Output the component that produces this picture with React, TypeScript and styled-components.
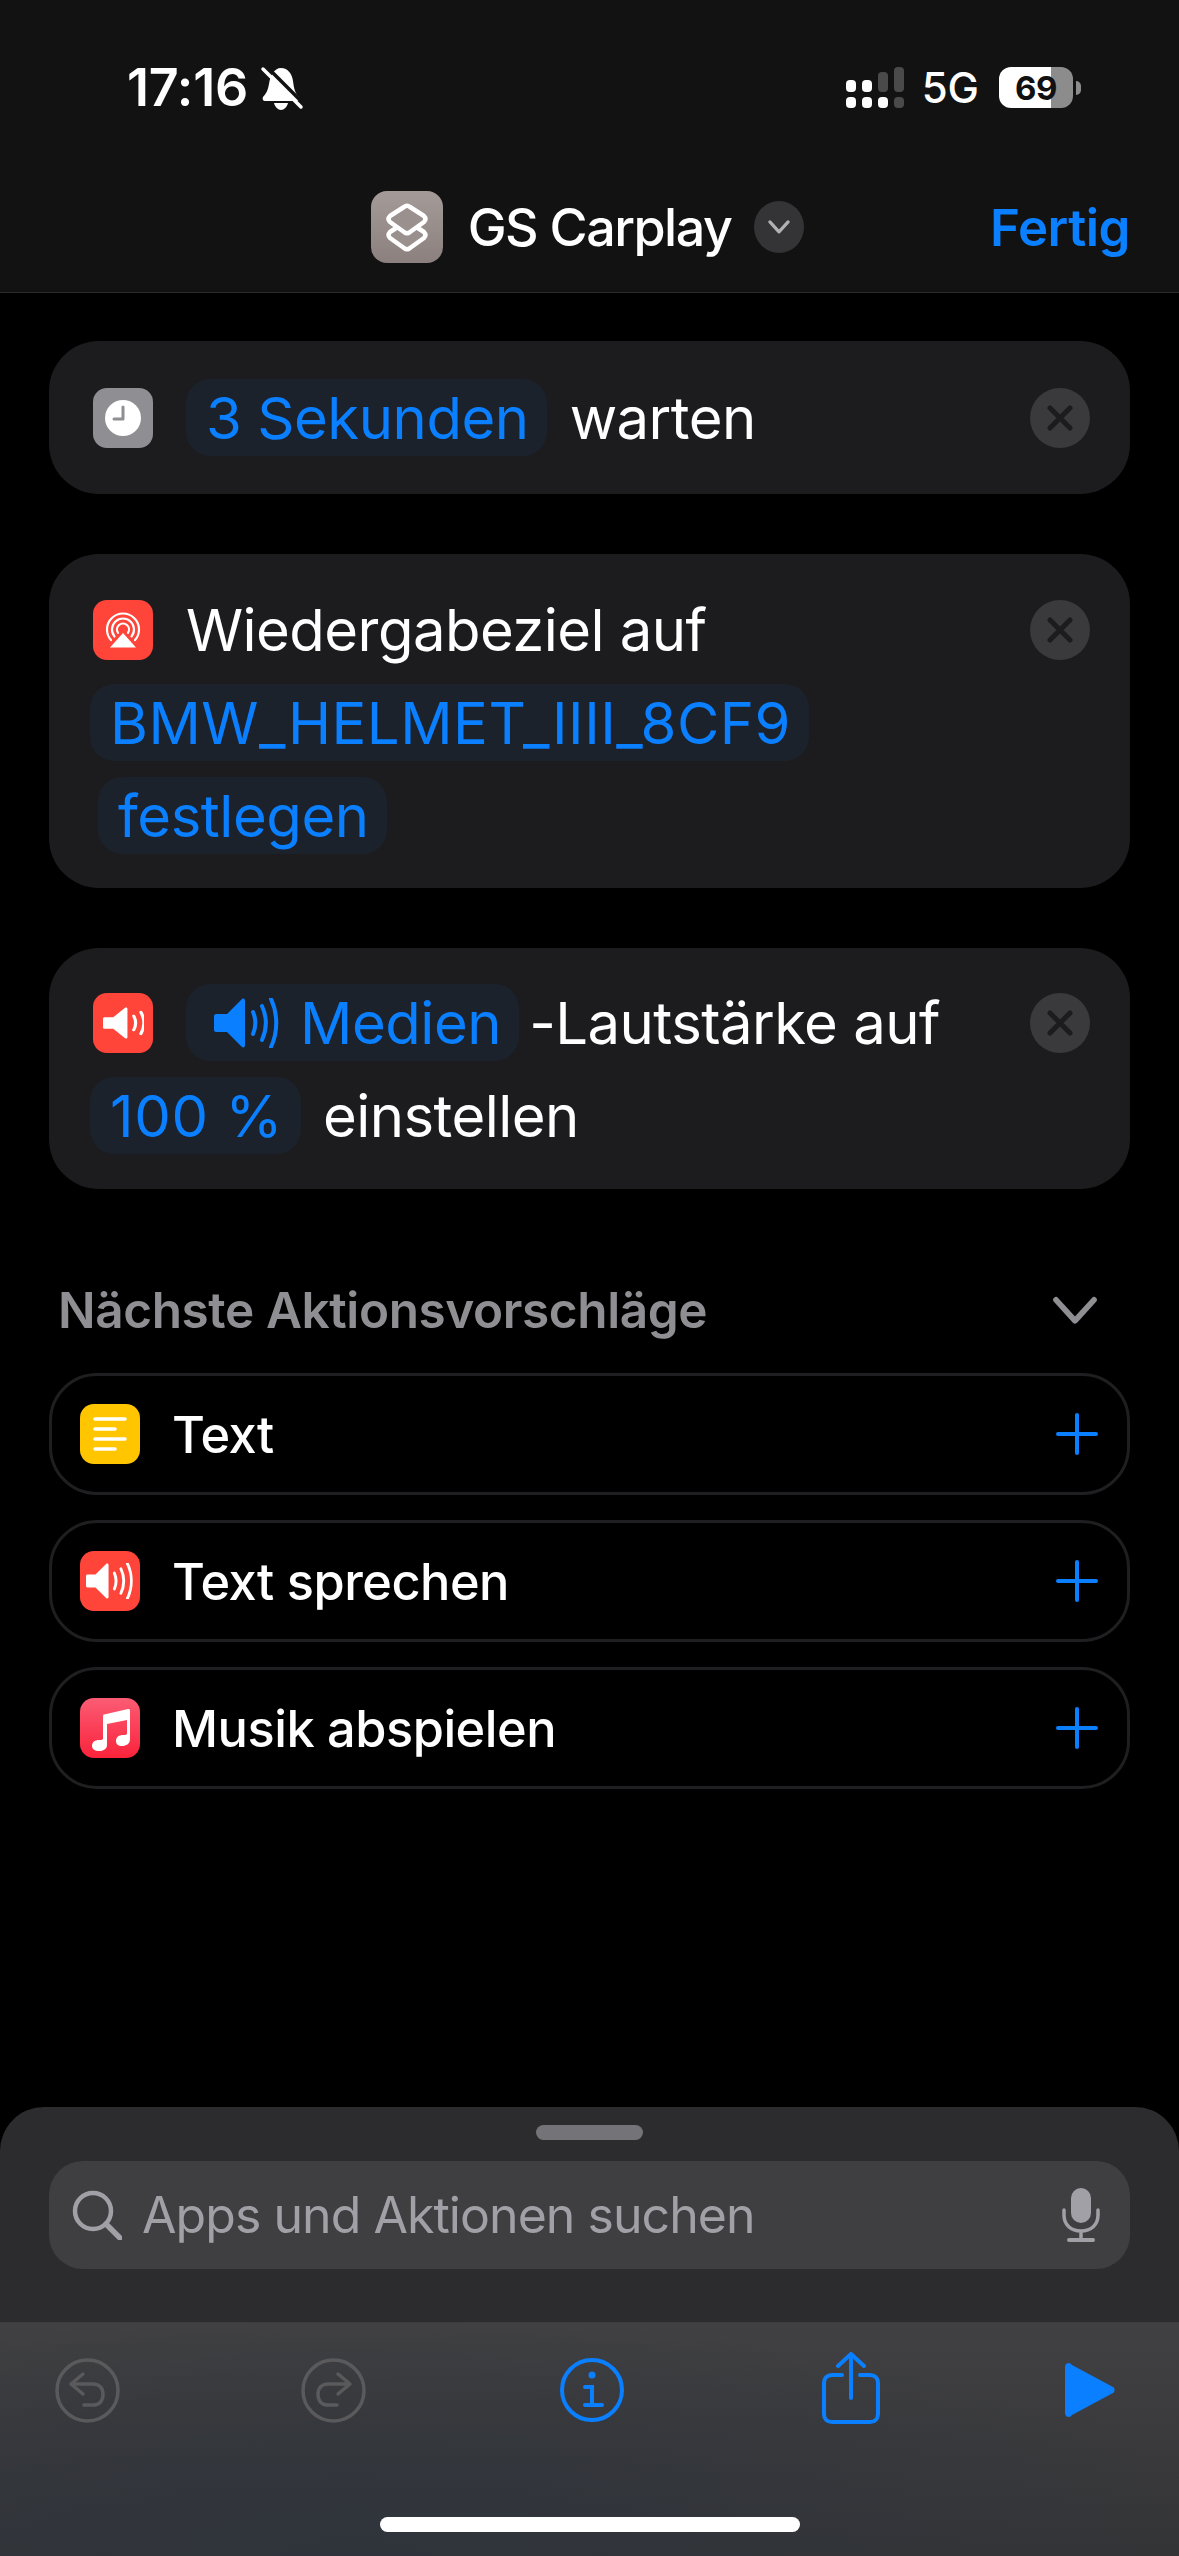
import React from 'react'
import styled, { createGlobalStyle } from 'styled-components'

const blue = '#0a7fff'

const GlobalStyle = createGlobalStyle`
  html, body { margin: 0; padding: 0; background: #000; }
  body { font-family: Inter, "Noto Sans", sans-serif; color: #fff; -webkit-font-smoothing: antialiased; }
`

const Screen = styled.div`
  width: 1179px;
  height: 2556px;
  display: flex;
  flex-direction: column;
  background: #000;
  overflow: hidden;
`

const Header = styled.header`
  height: 293px;
  flex: none;
  box-sizing: border-box;
  padding-top: 54px;
  background: #121212;
  border-bottom: 1px solid #2a2a2b;
`

const StatusBar = styled.div`
  height: 67px;
  padding: 0 98px 0 127px;
  display: flex;
  align-items: center;
  justify-content: space-between;
`

const TimeGroup = styled.div`
  display: flex;
  align-items: center;
  gap: 12px;
`

const Time = styled.span`
  font-size: 52px;
  font-weight: 600;
  letter-spacing: -0.2px;
`

const StatusRight = styled.div`
  display: flex;
  align-items: center;
`

const Network = styled.span`
  margin: 0 20px 0 18px;
  font-size: 42px;
  font-weight: 500;
`

const Battery = styled.div`
  width: 74px;
  height: 41px;
  border-radius: 12px;
  overflow: hidden;
  display: flex;
  align-items: center;
  justify-content: center;
  color: #111;
  font-size: 33px;
  font-weight: 700;
  letter-spacing: -0.5px;
  background: linear-gradient(to right, #fff 70%, #8c8c8c 70%);
`

const BatteryNub = styled.div`
  width: 5px;
  height: 14px;
  margin-left: 3px;
  border-radius: 0 8px 8px 0;
  background: #8c8c8c;
`

const NavBar = styled.div`
  margin-top: 70px;
  padding: 0 49px;
  display: grid;
  grid-template-columns: 1fr auto 1fr;
  align-items: center;
`

const TitleGroup = styled.div`
  grid-column: 2;
  margin-right: 4px;
  display: flex;
  align-items: center;
`

const AppIcon = styled.div`
  width: 72px;
  height: 72px;
  border-radius: 16px;
  display: flex;
  align-items: center;
  justify-content: center;
  background: linear-gradient(#a49b98, #8b807d);
`

const Title = styled.span`
  margin: 0 23px 0 25px;
  font-size: 52px;
  font-weight: 500;
  letter-spacing: -1.5px;
`

const TitleChevron = styled.div`
  width: 50px;
  height: 52px;
  border-radius: 50%;
  display: flex;
  align-items: center;
  justify-content: center;
  background: #343437;
`

const Done = styled.span`
  justify-self: end;
  color: ${blue};
  font-size: 51px;
  font-weight: 600;
  letter-spacing: -0.5px;
`

const Content = styled.main`
  flex: 1;
  padding: 48px 49px 0;
  display: flex;
  flex-direction: column;
`

const Card = styled.section<{ $top: number; $bottom: number; $after: number }>`
  display: flex;
  justify-content: space-between;
  box-sizing: border-box;
  margin-bottom: ${(p) => p.$after}px;
  padding: ${(p) => p.$top}px 40px ${(p) => p.$bottom}px 41px;
  border-radius: 50px;
  background: #1c1c1e;
`

const Lines = styled.div`
  display: flex;
  flex-direction: column;
  gap: 16px;
`

const Line = styled.div`
  height: 77px;
  display: flex;
  align-items: center;
`

const ActionIcon = styled.div<{ $bg: string }>`
  flex: none;
  width: 60px;
  height: 60px;
  margin: 0 33px 0 3px;
  border-radius: 14px;
  display: flex;
  align-items: center;
  justify-content: center;
  background: ${(p) => p.$bg};
`

const Pill = styled.span<{ $indent?: number; $track?: number }>`
  height: 77px;
  box-sizing: border-box;
  margin-left: ${(p) => p.$indent ?? 0}px;
  padding: 0 18px 0 20px;
  display: inline-flex;
  align-items: center;
  gap: 20px;
  border-radius: 24px;
  background: #1b222c;
  color: ${blue};
  font-size: 58px;
  letter-spacing: ${(p) => p.$track ?? -0.45}px;
  white-space: nowrap;
`

const PillGlyph = styled.span`
  margin-left: 8px;
  display: flex;
`

const Plain = styled.span<{ $gap?: number }>`
  margin-left: ${(p) => p.$gap ?? 0}px;
  font-size: 58px;
  letter-spacing: -0.55px;
  white-space: nowrap;
`

const Remove = styled.div`
  flex: none;
  width: 60px;
  height: 60px;
  margin-top: 9px;
  border-radius: 50%;
  display: flex;
  align-items: center;
  justify-content: center;
  background: #3a3a3c;
`

const SectionHead = styled.div`
  margin: 95px 0 37px;
  padding: 0 32px 0 9px;
  height: 52px;
  display: flex;
  align-items: center;
  justify-content: space-between;
  color: #8e8e93;
  font-size: 49.5px;
  font-weight: 600;
  letter-spacing: -0.4px;
`

const Suggestions = styled.div`
  display: flex;
  flex-direction: column;
  gap: 25px;
`

const Suggestion = styled.div`
  height: 122px;
  box-sizing: border-box;
  padding: 0 29px 0 28px;
  display: flex;
  align-items: center;
  border: 3px solid #1f1f21;
  border-radius: 48px;
`

const SuggestionIcon = styled(ActionIcon)`
  margin: 0 32px 0 0;
`

const SuggestionLabel = styled.span`
  flex: 1;
  font-size: 50.5px;
  font-weight: 500;
  letter-spacing: -0.5px;
`

const Sheet = styled.div`
  height: 449px;
  flex: none;
  display: flex;
  flex-direction: column;
  border-radius: 44px 44px 0 0;
  overflow: hidden;
  background: #2c2c2e;
`

const Handle = styled.div`
  flex: none;
  width: 107px;
  height: 15px;
  margin: 18px auto 21px;
  border-radius: 8px;
  background: #737378;
`

const SearchField = styled.div`
  flex: none;
  height: 108px;
  margin: 0 49px;
  padding: 0 30px 0 23px;
  display: flex;
  align-items: center;
  border-radius: 34px;
  background: #3f3f41;
`

const SearchText = styled.span`
  flex: 1;
  margin-left: 20px;
  color: #a0a0a6;
  font-size: 50px;
  letter-spacing: -0.95px;
`

const Toolbar = styled.div`
  flex: 1;
  margin-top: 53px;
  padding-top: 29px;
  border-top: 1px solid #3d3d3f;
  background: radial-gradient(ellipse 900px 240px at 30% 100%, #2f343c 0%, transparent 100%),
    linear-gradient(#414143, #343436);
`

const ToolRow = styled.div`
  height: 72px;
  padding-left: 55px;
  display: grid;
  grid-template-columns: 246px 259px 262px 243px auto;
  align-items: center;
`

const ShareSvg = styled.svg`
  margin-bottom: 4px;
`

const HomeBar = styled.div`
  width: 420px;
  height: 15px;
  margin: 93px auto 0;
  border-radius: 8px;
  background: #fff;
`

const Bell = () => (
  <svg width="44" height="44" viewBox="0 0 44 44">
    <path d="M21 2c7 0 11 6 12 13 1 8 2 12 6 16 1 2 0 4-2 4H5c-2 0-3-2-2-4 3-3 5-7 6-13C10 10 14 2 21 2z" fill="#fff" />
    <path d="M14 37h14c-1 4-4 7-7 7s-6-3-7-7z" fill="#fff" />
    <path d="M6 0l38 38" stroke="#121212" strokeWidth="3.500" />
    <path d="M3 3l38 38" stroke="#fff" strokeWidth="3.500" strokeLinecap="round" />
  </svg>
)

const Signal = () => (
  <svg width="58" height="41" viewBox="0 0 58 41">
    <rect x="0" y="13" width="10" height="12" rx="4" fill="#fff" />
    <rect x="16" y="13" width="10" height="12" rx="4" fill="#fff" />
    <rect x="32" y="5" width="10" height="20" rx="4" fill="#4a4a4a" />
    <rect x="48" y="0" width="10" height="25" rx="4" fill="#4a4a4a" />
    <rect x="0" y="30" width="10" height="11" rx="4" fill="#fff" />
    <rect x="16" y="30" width="10" height="11" rx="4" fill="#fff" />
    <rect x="32" y="30" width="10" height="11" rx="4" fill="#fff" />
    <rect x="48" y="30" width="10" height="11" rx="4" fill="#4a4a4a" />
  </svg>
)

const ShortcutsGlyph = () => (
  <svg width="46" height="50" viewBox="0 0 46 50" fill="#9a908d" stroke="#fff" strokeWidth="4.500" strokeLinejoin="round">
    <path d="M20 21Q23 18.500 26 21L40 30Q43 33 40 36L26 46Q23 48.500 20 46L6 36Q3 33 6 30Z" />
    <path d="M20 5Q23 2.500 26 5L40 14Q43 17 40 20L26 30Q23 32.500 20 30L6 20Q3 17 6 14Z" />
  </svg>
)

const Chevron = ({ size, color, weight }: { size: number; color: string; weight: number }) => (
  <svg width={size} height={size * 0.62} viewBox="0 0 24 15" fill="none" stroke={color} strokeWidth={weight} strokeLinecap="round" strokeLinejoin="round">
    <path d="M2 2l10 11L22 2" />
  </svg>
)

const ClockGlyph = () => (
  <svg width="36" height="36" viewBox="0 0 36 36">
    <circle cx="18" cy="18" r="18" fill="#fff" />
    <path d="M18 7v12H9" fill="none" stroke="#8e8e93" strokeWidth="3" strokeLinecap="round" strokeLinejoin="round" />
  </svg>
)

const AirplayGlyph = () => (
  <svg width="36" height="36" viewBox="0 0 36 36" fill="none" stroke="#fff" strokeWidth="2.200" strokeLinecap="round">
    <path d="M6 28.100A16 16 0 1 1 30 28.100" />
    <path d="M9.500 24.500A11 11 0 1 1 26.500 24.500" />
    <path d="M13 20.800A6 6 0 1 1 23 20.800" />
    <path d="M18 21L31 35.500H5z" fill="#fff" stroke="none" />
  </svg>
)

// arcs: the small tile in the action card only has two
const Speaker = ({ width, height, color, arcs = 3 }: { width: number; height: number; color: string; arcs?: number }) => (
  <svg
    width={width}
    height={height}
    viewBox={arcs === 3 ? '0 0 66 50' : '0 0 52 50'}
    preserveAspectRatio="none"
    fill="none"
    stroke={color}
    strokeWidth="4"
    strokeLinecap="round"
  >
    <path d="M2 16h11L28 1c2-1 3 0 3 2v44c0 2-1 3-3 2L13 34H2c-1 0-2-1-2-2V18c0-1 1-2 2-2z" fill={color} stroke="none" />
    <path d="M39 14c3 7 3 15 0 22" />
    <path d="M48 8c5 11 5 23 0 34" />
    {arcs === 3 && <path d="M57 1c7 15 7 33 0 48" />}
  </svg>
)

const NoteLines = () => (
  <svg width="34" height="36" viewBox="0 0 34 36" stroke="#fff" strokeWidth="3.500" strokeLinecap="round">
    <path d="M2 3h30M2 13h20M2 23h30M2 33h20" />
  </svg>
)

const MusicNote = () => (
  <svg width="46" height="46" viewBox="0 0 46 46" fill="#fff">
    <path d="M15 10l26-6c1 0 2 0 2 2v28c0 5-4 7-8 7-4 0-6-2-6-5 0-4 3-6 7-6 2 0 3 0 4-1V15l-20 4v21c0 4-4 6-8 6s-7-2-7-5c0-4 3-6 7-6 2 0 3 0 4-1V12c0-1 0-2 1-2z" />
  </svg>
)

const Cross = () => (
  <svg width="26" height="26" viewBox="0 0 26 26" stroke="#1c1c1e" strokeWidth="5" strokeLinecap="round">
    <path d="M3 3l20 20M23 3L3 23" />
  </svg>
)

const Plus = () => (
  <svg width="42" height="42" viewBox="0 0 42 42" stroke={blue} strokeWidth="4" strokeLinecap="round">
    <path d="M21 2v38M2 21h38" />
  </svg>
)

const SearchGlyph = () => (
  <svg width="50" height="50" viewBox="0 0 50 50" fill="none" stroke="#a0a0a6" strokeWidth="4.500" strokeLinecap="round">
    <circle cx="21" cy="21" r="18" />
    <path d="M34 34l14 14" strokeWidth="5.500" />
  </svg>
)

const Mic = () => (
  <svg width="38" height="54" viewBox="0 0 38 54" fill="none" stroke="#a0a0a6" strokeWidth="3.500" strokeLinecap="round">
    <rect x="9" y="0" width="20" height="35" rx="10" fill="#a0a0a6" stroke="none" />
    <path d="M2 22v5c0 10 7 16 17 16s17-6 17-16v-5M19 43v8" />
    <path d="M7 52h24" strokeWidth="4" />
  </svg>
)

const HistoryIcon = ({ flip }: { flip?: boolean }) => (
  <svg width="65" height="65" viewBox="0 0 65 65" fill="none" stroke="#5a5a5c" strokeWidth="3.500" strokeLinecap="round" strokeLinejoin="round">
    <circle cx="32.500" cy="32.500" r="30.500" />
    <g transform={flip ? 'matrix(-1 0 0 1 65 0)' : undefined}>
      <path d="M28 16L16 26l12 10" />
      <path d="M17 26h21c6 0 10 4 10 10.500S44 47 38 47h-9" />
    </g>
  </svg>
)

const InfoIcon = () => (
  <svg width="64" height="64" viewBox="0 0 64 64" fill="none" stroke={blue} strokeWidth="4" strokeLinecap="round">
    <circle cx="32" cy="32" r="30" />
    <circle cx="32" cy="17" r="3.500" fill={blue} stroke="none" />
    <path d="M25 29h7v18M25 47h17" />
  </svg>
)

const ShareIcon = () => (
  <ShareSvg width="58" height="72" viewBox="0 0 58 72" fill="none" stroke={blue} strokeWidth="4" strokeLinecap="round" strokeLinejoin="round">
    <path d="M20 23H10c-5 0-8 3-8 8v31c0 5 3 8 8 8h38c5 0 8-3 8-8V31c0-5-3-8-8-8H38" />
    <path d="M29 46V2M16 14L29 2l13 12" />
  </ShareSvg>
)

const PlayIcon = () => (
  <svg width="50" height="54" viewBox="0 0 50 54">
    <path d="M4 0C1 0 0 2 0 4v46c0 2 1 4 4 4 1 0 2-1 3-2l41-22c2-1 2-5 0-6L7 2C6 1 5 0 4 0z" fill={blue} />
  </svg>
)

const suggestions = [
  { label: 'Text', bg: '#ffc600', icon: <NoteLines /> },
  { label: 'Text sprechen', bg: '#ff453a', icon: <Speaker width={48} height={36} color="#fff" /> },
  { label: 'Musik abspielen', bg: 'linear-gradient(#fb5c74, #fa233b)', icon: <MusicNote /> },
]

export default function App() {
  return (
    <Screen>
      <GlobalStyle />
      <Header>
        <StatusBar>
          <TimeGroup>
            <Time>17:16</Time>
            <Bell />
          </TimeGroup>
          <StatusRight>
            <Signal />
            <Network>5G</Network>
            <Battery>69</Battery>
            <BatteryNub />
          </StatusRight>
        </StatusBar>
        <NavBar>
          <TitleGroup>
            <AppIcon>
              <ShortcutsGlyph />
            </AppIcon>
            <Title>GS Carplay</Title>
            <TitleChevron>
              <Chevron size={22} color="#b0b0b5" weight={3.5} />
            </TitleChevron>
          </TitleGroup>
          <Done>Fertig</Done>
        </NavBar>
      </Header>

      <Content>
        <Card $top={38} $bottom={38} $after={60}>
          <Lines>
            <Line>
              <ActionIcon $bg="#8e8e93">
                <ClockGlyph />
              </ActionIcon>
              <Pill>3 Sekunden</Pill>
              <Plain $gap={23}>warten</Plain>
            </Line>
          </Lines>
          <Remove>
            <Cross />
          </Remove>
        </Card>

        <Card $top={37} $bottom={34} $after={60}>
          <Lines>
            <Line>
              <ActionIcon $bg="#ff453a">
                <AirplayGlyph />
              </ActionIcon>
              <Plain>Wiedergabeziel auf</Plain>
            </Line>
            <Line>
              <Pill $track={0.5}>BMW_HELMET_IIII_8CF9</Pill>
            </Line>
            <Line>
              <Pill $indent={8}>festlegen</Pill>
            </Line>
          </Lines>
          <Remove>
            <Cross />
          </Remove>
        </Card>

        <Card $top={36} $bottom={35} $after={0}>
          <Lines>
            <Line>
              <ActionIcon $bg="#ff453a">
                <Speaker width={41} height={32} color="#fff" arcs={2} />
              </ActionIcon>
              <Pill>
                <PillGlyph>
                  <Speaker width={66} height={50} color={blue} />
                </PillGlyph>
                Medien
              </Pill>
              <Plain $gap={10}>-Lautstärke auf</Plain>
            </Line>
            <Line>
              <Pill $track={0.6}>100 %</Pill>
              <Plain $gap={22}>einstellen</Plain>
            </Line>
          </Lines>
          <Remove>
            <Cross />
          </Remove>
        </Card>

        <SectionHead>
          Nächste Aktionsvorschläge
          <Chevron size={46} color="#8e8e93" weight={3} />
        </SectionHead>

        <Suggestions>
          {suggestions.map((s) => (
            <Suggestion key={s.label}>
              <SuggestionIcon $bg={s.bg}>{s.icon}</SuggestionIcon>
              <SuggestionLabel>{s.label}</SuggestionLabel>
              <Plus />
            </Suggestion>
          ))}
        </Suggestions>
      </Content>

      <Sheet>
        <Handle />
        <SearchField>
          <SearchGlyph />
          <SearchText>Apps und Aktionen suchen</SearchText>
          <Mic />
        </SearchField>
        <Toolbar>
          <ToolRow>
            <HistoryIcon />
            <HistoryIcon flip />
            <InfoIcon />
            <ShareIcon />
            <PlayIcon />
          </ToolRow>
          <HomeBar />
        </Toolbar>
      </Sheet>
    </Screen>
  )
}
